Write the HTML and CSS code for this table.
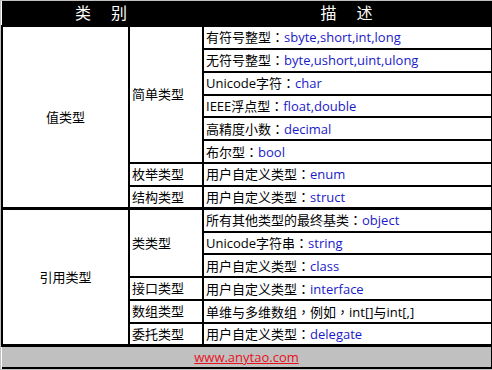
FILE: index.html
```html
<!DOCTYPE html>
<html lang="zh-CN">
<head>
<meta charset="utf-8">
<link rel="stylesheet" href="styles.css">
</head>
<body>
<table class="types">
  <colgroup>
    <col class="c1"><col class="c2"><col class="c3">
  </colgroup>
  <thead>
    <tr class="head">
      <th colspan="2">类　别</th>
      <th>描　述</th>
    </tr>
  </thead>
  <tbody>
    <tr>
      <td class="group" rowspan="8">值类型</td>
      <td class="sub" rowspan="6">简单类型</td>
      <td class="desc">有符号整型<span class="p" lang="zh-TW">：</span><span class="kw">sbyte,short,int,long</span></td>
    </tr>
    <tr><td class="desc">无符号整型<span class="p" lang="zh-TW">：</span><span class="kw">byte,ushort,uint,ulong</span></td></tr>
    <tr><td class="desc">Unicode字符<span class="p" lang="zh-TW">：</span><span class="kw">char</span></td></tr>
    <tr><td class="desc">IEEE浮点型<span class="p" lang="zh-TW">：</span><span class="kw">float,double</span></td></tr>
    <tr><td class="desc">高精度小数<span class="p" lang="zh-TW">：</span><span class="kw">decimal</span></td></tr>
    <tr><td class="desc">布尔型<span class="p" lang="zh-TW">：</span><span class="kw">bool</span></td></tr>
    <tr>
      <td class="sub">枚举类型</td>
      <td class="desc">用户自定义类型<span class="p" lang="zh-TW">：</span><span class="kw">enum</span></td>
    </tr>
    <tr>
      <td class="sub">结构类型</td>
      <td class="desc">用户自定义类型<span class="p" lang="zh-TW">：</span><span class="kw">struct</span></td>
    </tr>
    <tr class="split">
      <td class="group" rowspan="6">引用类型</td>
      <td class="sub" rowspan="3">类类型</td>
      <td class="desc">所有其他类型的最终基类<span class="p" lang="zh-TW">：</span><span class="kw">object</span></td>
    </tr>
    <tr><td class="desc">Unicode字符串<span class="p" lang="zh-TW">：</span><span class="kw">string</span></td></tr>
    <tr><td class="desc">用户自定义类型<span class="p" lang="zh-TW">：</span><span class="kw">class</span></td></tr>
    <tr>
      <td class="sub">接口类型</td>
      <td class="desc">用户自定义类型<span class="p" lang="zh-TW">：</span><span class="kw">interface</span></td>
    </tr>
    <tr>
      <td class="sub">数组类型</td>
      <td class="desc">单维与多维数组<span class="p" lang="zh-TW">，</span>例如<span class="p" lang="zh-TW">，</span>int[]与int[,]</td>
    </tr>
    <tr>
      <td class="sub">委托类型</td>
      <td class="desc">用户自定义类型<span class="p" lang="zh-TW">：</span><span class="kw">delegate</span></td>
    </tr>
  </tbody>
  <tfoot>
    <tr class="foot">
      <td colspan="3"><a class="site" href="#">www.anytao.com</a></td>
    </tr>
  </tfoot>
</table>
</body>
</html>
```

FILE: styles.css
```css
html, body {
  margin: 0;
  padding: 0;
  background: #c0c0c0;
}
body {
  padding: 1px 0 0 1px;
  font-family: "Open Sans", "Noto Sans CJK SC", sans-serif;
  font-size: 13px;
  color: #000;
}
.types {
  border-collapse: collapse;
  table-layout: fixed;
  width: 490px;
  background: #fff;
}
.c1 { width: 127px; }
.c2 { width: 74px; }
.c3 { width: 289px; }

.types tbody tr { height: 22.85px; }
.types td {
  border: 2px solid #000;
  padding: 0 2px;
  line-height: 17px;
  vertical-align: middle;
  white-space: nowrap;
}
.head th {
  background: #000;
  color: #fff;
  font-weight: normal;
  font-size: 16px;
  letter-spacing: 2px;
  height: 24px;
  padding: 0;
  line-height: 22px;
  border: none;
  border-right: 2px solid #000;
}
.group {
  text-align: center;
  border-left: none;
}
.sub { text-align: left; }
.desc { text-align: left; }
.p { font-family: "Noto Sans CJK TC", sans-serif; }
.kw { color: #1a1ac8; }
.split td { border-top-width: 3px; }
.types .foot td {
  background: #c0c0c0;
  border-left: none;
  border-top: 3px solid #000;
  border-bottom: 2px solid #000;
  text-align: center;
  height: 20px;
  line-height: 18px;
}
.site {
  color: #e8101c;
  text-decoration: underline;
}
```
